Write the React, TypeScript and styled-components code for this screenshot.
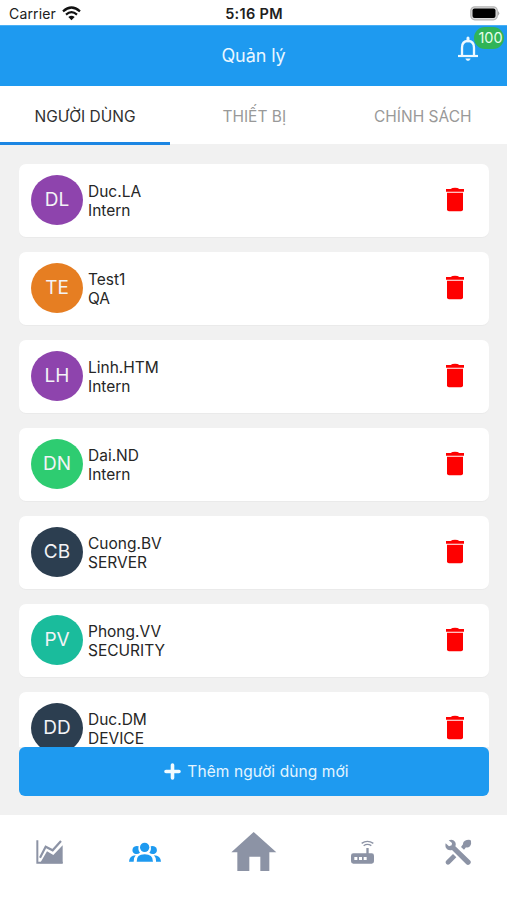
import React from "react";
import styled, { createGlobalStyle } from "styled-components";

const GlobalStyle = createGlobalStyle`
  * { box-sizing: border-box; }
  body { margin: 0; background: #fff; font-family: Inter, "Noto Sans", sans-serif; }
  button { font: inherit; border: 0; padding: 0; background: none; }
  svg { display: block; flex: none; }
`;

const Screen = styled.div`
  width: 507px;
  height: 900px;
  display: flex;
  flex-direction: column;
  overflow: hidden;
  background: #fff;
`;

const StatusBar = styled.div`
  height: 25px;
  flex: none;
  display: grid;
  grid-template-columns: 1fr auto 1fr;
  align-items: center;
  padding: 2px 7px 0 9px;
  color: #202020;
`;

const Carrier = styled.div`
  display: flex;
  align-items: center;
  gap: 6px;
  font-size: 14px;
  letter-spacing: 0.15px;
`;

const Clock = styled.div`
  margin-right: 1px;
  font-size: 14.5px;
  font-weight: 600;
  letter-spacing: 0.3px;
`;

const BatterySlot = styled.div`
  display: flex;
  justify-content: flex-end;
`;

const Header = styled.header`
  position: relative;
  height: 61px;
  flex: none;
  display: flex;
  align-items: center;
  justify-content: center;
  background: #1e9af0;
  border-top: 1px solid #49b0f6;
  color: #eaf7ff;
`;

const Title = styled.h1`
  margin: 0;
  font-size: 18px;
  line-height: 22px;
  font-weight: 400;
  letter-spacing: -0.1px;
`;

const Bell = styled.button`
  position: absolute;
  top: 10px;
  left: 457px;
`;

const Badge = styled.span`
  position: absolute;
  left: 17px;
  top: -9px;
  width: 30px;
  height: 22px;
  padding-left: 3px;
  border-radius: 11px;
  background: #30b457;
  color: #e6ffec;
  font-size: 14.5px;
  line-height: 22px;
  text-align: center;
`;

const Tabs = styled.nav`
  position: relative;
  height: 58px;
  flex: none;
  display: grid;
  grid-template-columns: repeat(3, 1fr);
  background: #fff;
`;

const Tab = styled.button<{ $active?: boolean }>`
  height: ${(p) => (p.$active ? 59 : 58)}px;
  padding-top: ${(p) => (p.$active ? 4 : 2)}px;
  border-bottom: ${(p) => (p.$active ? "3px solid #1c86e3" : "0")};
  width: ${(p) => (p.$active ? "170px" : "auto")};
  color: ${(p) => (p.$active ? "#303030" : "#999")};
  font-size: 15.5px;
`;

const Content = styled.main`
  height: 671px;
  flex: none;
  display: flex;
  flex-direction: column;
  padding: 20px 18px 18px 19px;
  background: #f1f1f1;
`;

const UserList = styled.div`
  height: 583px;
  flex: none;
  display: flex;
  flex-direction: column;
  gap: 15px;
  overflow: hidden;
`;

const Card = styled.article`
  height: 73px;
  flex: none;
  display: flex;
  align-items: center;
  padding: 0 24px 0 12px;
  border-radius: 7px;
  background: #fff;
  box-shadow: 0 1px 1px rgba(0, 0, 0, 0.03);
`;

const Avatar = styled.div<{ $color: string }>`
  width: 52px;
  height: 50px;
  margin-bottom: 1px;
  flex: none;
  border-radius: 50%;
  background: ${(p) => p.$color};
  color: #f3f3f6;
  font-size: 19px;
  line-height: 49px;
  text-align: center;
`;

const Person = styled.div`
  flex: 1;
  margin-left: 5px;
  color: #262626;
  font-size: 15.5px;
  line-height: 19px;
`;

const DeleteButton = styled.button`
  margin-bottom: 2px;
`;

const AddButton = styled.button`
  height: 49px;
  flex: none;
  display: flex;
  align-items: center;
  justify-content: center;
  gap: 6px;
  padding-left: 5px;
  border-radius: 6px;
  background: #1e9af0;
  color: #e4f5ff;
  font-size: 15.5px;
  letter-spacing: 0.1px;
`;

const BottomBar = styled.nav`
  flex: 1;
  display: grid;
  grid-template-columns: 93px 102px 119px 95px auto;
  align-items: start;
  padding: 16px 35px 0 36px;
  background: #fff;
`;

const BarItem = styled.button<{ $active?: boolean }>`
  height: 42px;
  display: flex;
  align-items: center;
  color: ${(p) => (p.$active ? "#1e9af0" : "#8c93a5")};
`;

const WifiIcon = () => (
  <svg width="19" height="15" viewBox="0 0 57 45">
    <g fill="none" stroke="#111" strokeWidth="6.5">
      <path d="M3 16Q28.500 -7 54 16" />
      <path d="M12 26Q28.500 11 45 26" />
    </g>
    <path d="M19 33Q28.500 25 38 33L28.500 43Z" fill="#111" />
  </svg>
);

const BatteryIcon = () => (
  <svg width="30" height="15" viewBox="0 0 30 15">
    <rect x="0.800" y="0.800" width="26.500" height="13" rx="4" fill="#ddd" stroke="#b5b5b5" strokeWidth="1.200" />
    <rect x="2.500" y="2.600" width="23" height="9.400" rx="2" fill="#000" />
    <path d="M28 5Q30.500 7.300 28 9.700Z" fill="#aaa" />
  </svg>
);

const BellIcon = () => (
  <svg width="22" height="26" viewBox="0 0 66 78" fill="none" stroke="#edf9ff">
    <path d="M15 58V35Q15 15 33 15T51 35V58" strokeWidth="7" />
    <path d="M3 60H63" strokeWidth="6.500" />
    <path d="M33 6V14" strokeWidth="9" strokeLinecap="round" />
    <path d="M26 68H40Q38 74 33 74T26 68Z" fill="#edf9ff" strokeWidth="1" />
  </svg>
);

const TrashIcon = () => (
  <svg width="20" height="25" viewBox="0 0 60 75" fill="#fe0000">
    <path d="M3 6H17Q21 2 30 2T43 6H57V14H3Z" />
    <path d="M6 17H54V67Q54 73 48 73H12Q6 73 6 67Z" />
  </svg>
);

const PlusIcon = () => (
  <svg width="17" height="17" viewBox="0 0 17 17">
    <path d="M8.500 2V15M2 8.500H15" stroke="#f2fbff" strokeWidth="3.600" strokeLinecap="round" />
  </svg>
);

const ChartIcon = () => (
  <svg width="27" height="24" viewBox="108 479 81 72">
    <path d="M112 480V547H188" fill="none" stroke="currentColor" strokeWidth="6" />
    <path d="M120 532L137 499L158 510L183 482" fill="none" stroke="currentColor" strokeWidth="6.500" />
    <path d="M120 549L141 513L160 524L188 495V549Z" fill="currentColor" />
  </svg>
);

const PeopleIcon = () => (
  <svg width="32" height="20" viewBox="388 488 96 60" fill="currentColor">
    <circle cx="435" cy="504" r="14" />
    <path d="M417 501Q407 497 400 505Q395 518 405 523Q414 526 421 520Q414 512 417 501Z" />
    <path d="M453 501Q463 497 470 505Q475 518 465 523Q456 526 449 520Q456 512 453 501Z" />
    <path d="M411 547Q410 525 435 525T460 547Z" />
    <path d="M388 547Q389 529 408 528Q401 536 402 547Z" />
    <path d="M484 547Q483 529 463 528Q470 536 469 547Z" />
  </svg>
);

const HomeIcon = () => (
  <svg width="46" height="40" viewBox="693 454 138 120" fill="currentColor">
    <path d="M694 515L761 454L829 515H808V571H781V528H748V571H712V515Z" />
  </svg>
);

const RouterIcon = () => (
  <svg width="24" height="24" viewBox="291 479 72 72">
    <path
      fill="currentColor"
      fillRule="evenodd"
      d="M301 519H340V503H347V519H356Q363 519 363 526V543Q363 550 356 550H301Q294 550 294 543V526Q294 519 301 519ZM304 530V539H313V530ZM318 530V539H327V530ZM332 530V539H341V530Z"
    />
    <path d="M326 489Q343 477 361 489M332 496Q343 488 355 496" fill="none" stroke="currentColor" strokeWidth="4" />
  </svg>
);

const ToolsIcon = () => (
  <svg width="27" height="27" viewBox="577 476 81 81" fill="currentColor">
    <path d="M588 480Q600 475 607 484Q611 491 608 498L653 541Q657 547 651 552Q646 556 641 552L598 509Q586 512 580 503Q577 496 579 489L589 498L597 495L598 488Z" />
    <path d="M601 521L611 531L591 551Q586 556 581 551Q576 545 582 540Z" />
    <path d="M625 500L631 492Q630 483 642 479Q652 476 655 481Q657 490 652 498Q646 503 640 501L634 508Z" />
  </svg>
);

const users = [
  { initials: "DL", name: "Duc.LA", role: "Intern", color: "#8e44ad" },
  { initials: "TE", name: "Test1", role: "QA", color: "#e67e22" },
  { initials: "LH", name: "Linh.HTM", role: "Intern", color: "#8e44ad" },
  { initials: "DN", name: "Dai.ND", role: "Intern", color: "#2ecc71" },
  { initials: "CB", name: "Cuong.BV", role: "SERVER", color: "#2c3e50" },
  { initials: "PV", name: "Phong.VV", role: "SECURITY", color: "#1abc9c" },
  { initials: "DD", name: "Duc.DM", role: "DEVICE", color: "#2c3e50" },
];

export default function App() {
  return (
    <Screen>
      <GlobalStyle />
      <StatusBar>
        <Carrier>Carrier <WifiIcon /></Carrier>
        <Clock>5:16 PM</Clock>
        <BatterySlot><BatteryIcon /></BatterySlot>
      </StatusBar>
      <Header>
        <Title>Quản lý</Title>
        <Bell><BellIcon /><Badge>100</Badge></Bell>
      </Header>
      <Tabs>
        <Tab $active>NGƯỜI DÙNG</Tab>
        <Tab>THIẾT BỊ</Tab>
        <Tab>CHÍNH SÁCH</Tab>
      </Tabs>
      <Content>
        <UserList>
          {users.map((user) => (
            <Card key={user.name}>
              <Avatar $color={user.color}>{user.initials}</Avatar>
              <Person>
                <div>{user.name}</div>
                <div>{user.role}</div>
              </Person>
              <DeleteButton><TrashIcon /></DeleteButton>
            </Card>
          ))}
        </UserList>
        <AddButton><PlusIcon />Thêm người dùng mới</AddButton>
      </Content>
      <BottomBar>
        <BarItem><ChartIcon /></BarItem>
        <BarItem $active><PeopleIcon /></BarItem>
        <BarItem><HomeIcon /></BarItem>
        <BarItem><RouterIcon /></BarItem>
        <BarItem><ToolsIcon /></BarItem>
      </BottomBar>
    </Screen>
  );
}
